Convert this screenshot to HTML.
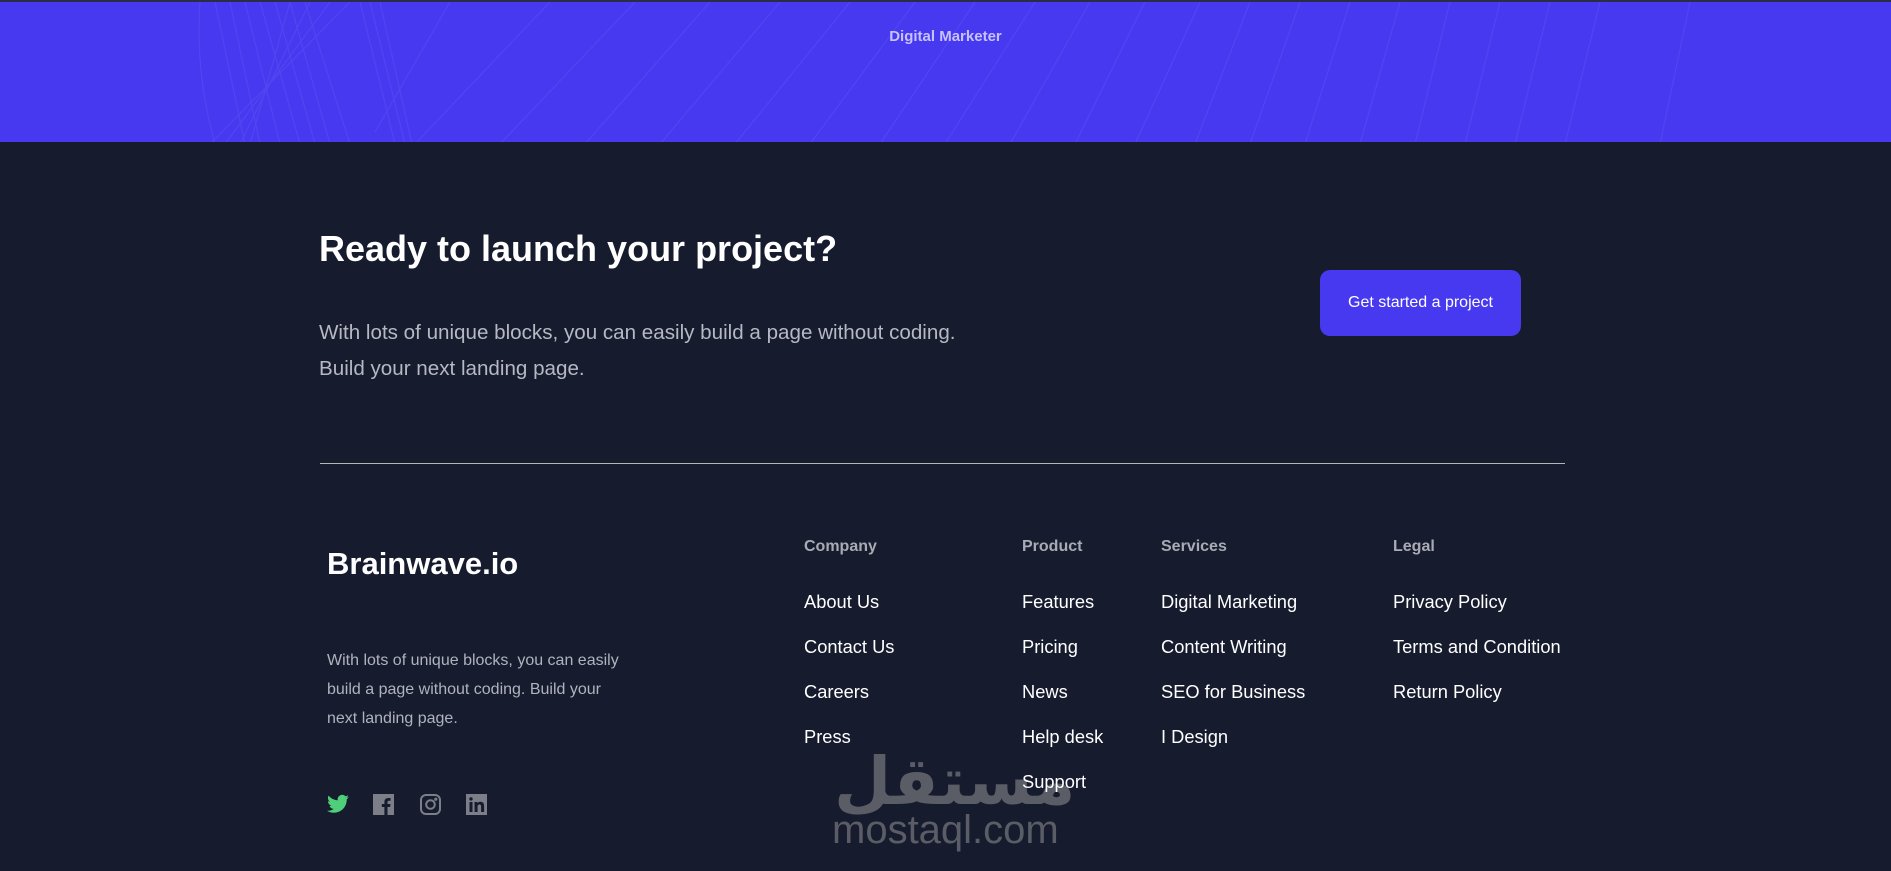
<!DOCTYPE html>
<html><head><meta charset="utf-8"><style>
*{margin:0;padding:0;box-sizing:border-box}
body{width:1891px;height:871px;overflow:hidden;background:#161b2e;font-family:"Liberation Sans",Arial,sans-serif;position:relative}
.band{position:absolute;left:0;top:0;width:1891px;height:142px;background:#4639ef;border-top:2px solid #2a2d45;overflow:hidden}
.a{position:absolute;white-space:nowrap}
.h{color:#a9abb4;font-size:16px;font-weight:bold}
.l{color:#fff;font-size:18.3px}
</style></head><body>
<div class="band">
<svg width="1891" height="142" style="position:absolute;left:0;top:0">
<g stroke="#5a50f5" stroke-width="1.2" fill="none" opacity="0.55">
<path d="M200 0 Q195 70 215 142"/><path d="M215 0 L245 142"/><path d="M230 0 L260 142"/><path d="M245 0 L280 142"/>
<path d="M260 0 L300 142"/><path d="M275 0 L315 142"/><path d="M290 0 L330 142"/><path d="M305 0 L350 142"/>
<path d="M350 0 L210 142"/><path d="M330 0 L225 142"/><path d="M310 0 L240 142"/><path d="M290 0 L250 142"/>
<path d="M360 0 L395 142"/><path d="M370 0 L405 142"/><path d="M380 0 L412 142"/>
<path d="M450 0 L375 130"/><path d="M550 0 L415 142"/><path d="M635 0 L500 142"/><path d="M710 0 L585 142"/>
<path d="M780 0 L660 142"/><path d="M850 0 L735 142"/><path d="M915 0 L810 142"/><path d="M975 0 L880 142"/>
<path d="M1035 0 L945 142"/><path d="M1090 0 L1010 142"/><path d="M1145 0 L1075 142"/><path d="M1200 0 L1135 142"/>
<path d="M1250 0 L1195 142"/><path d="M1300 0 L1250 142"/><path d="M1350 0 L1305 142"/><path d="M1400 0 L1360 142"/>
<path d="M1450 0 L1415 142"/><path d="M1500 0 L1465 142"/><path d="M1550 0 L1515 142"/><path d="M1600 0 L1565 142"/>
<path d="M1690 0 L1660 142"/>
</g></svg>
<div class="a" style="left:0;width:1891px;text-align:center;top:26px;color:#c6c2ff;font-size:15px;font-weight:bold">Digital Marketer</div>
</div>

<div class="a" style="left:319px;top:228px;color:#fff;font-size:36px;font-weight:bold">Ready to launch your project?</div>
<div class="a" style="left:319px;top:315px;color:#b6b8c2;font-size:20.6px;line-height:36px">With lots of unique blocks, you can easily build a page without coding.<br>Build your next landing page.</div>
<div class="a" style="left:1320px;top:270px;width:201px;height:66px;background:#4639ef;border-radius:10px;color:#fff;font-size:16px;line-height:66px;text-align:center">Get started a project</div>
<div class="a" style="left:320px;top:463px;width:1245px;height:1px;background:#b3b5bd"></div>

<div class="a" style="left:327px;top:546px;color:#fff;font-size:31px;font-weight:bold">Brainwave.io</div>
<div class="a" style="left:327px;top:646px;color:#b0b3bd;font-size:16px;line-height:29px">With lots of unique blocks, you can easily<br>build a page without coding. Build your<br>next landing page.</div>

<svg class="a" style="left:327px;top:794px" width="22" height="20" viewBox="0 0 24 20"><path fill="#4fcf7a" d="M24 2.4a10 10 0 0 1-2.8.8A5 5 0 0 0 23.3.4a10 10 0 0 1-3.1 1.2A4.9 4.9 0 0 0 11.8 6 14 14 0 0 1 1.7.9a4.9 4.9 0 0 0 1.5 6.6A4.9 4.9 0 0 1 1 6.9a4.9 4.9 0 0 0 3.9 4.9 5 5 0 0 1-2.2.1 4.9 4.9 0 0 0 4.6 3.4A9.9 9.9 0 0 1 0 17.3 14 14 0 0 0 7.5 19.5c9.1 0 14-7.5 14-14v-.6A10 10 0 0 0 24 2.4z"/></svg>
<svg class="a" style="left:373px;top:794px" width="21" height="21" viewBox="0 0 21 21"><rect width="21" height="21" fill="#7c7f88"/><path fill="#161b2e" d="M14.5 21v-8h2.6l.4-3h-3V8.2c0-.9.3-1.5 1.5-1.5h1.6V4.1a21 21 0 0 0-2.3-.1c-2.3 0-3.900 1.4-3.900 4V10H8.8v3h2.6v8z"/></svg>
<svg class="a" style="left:420px;top:794px" width="21" height="21" viewBox="0 0 21 21" fill="none" stroke="#7c7f88" stroke-width="2"><rect x="1" y="1" width="19" height="19" rx="5"/><circle cx="10.5" cy="10.5" r="4.3"/><circle cx="15.8" cy="5.2" r=".6" fill="#7c7f88"/></svg>
<svg class="a" style="left:466px;top:794px" width="21" height="21" viewBox="0 0 21 21"><rect width="21" height="21" fill="#7c7f88"/><path fill="#161b2e" d="M3.5 8h3v10h-3zM5 3.2a1.7 1.7 0 1 1 0 3.4 1.7 1.7 0 0 1 0-3.4zM8.5 8h2.9v1.4c.4-.8 1.4-1.600 3-1.600 3.1 0 3.7 2 3.7 4.7V18h-3v-4.9c0-1.2 0-2.6-1.6-2.6s-1.9 1.2-1.9 2.5v5h-3z"/></svg>

<div class="a" style="left:834px;top:738px;color:#5a5c66;font-size:66px;font-weight:bold;font-family:'Noto Sans CJK SC','DejaVu Sans',sans-serif;line-height:76px">مستقل</div>
<div class="a" style="left:832px;top:808px;color:#5a5c66;font-size:40px;line-height:44px">mostaql.com</div>

<div class="a h" style="left:804px;top:538px">Company</div>
<div class="a l" style="left:804px;top:591px">About Us</div>
<div class="a l" style="left:804px;top:636px">Contact Us</div>
<div class="a l" style="left:804px;top:681px">Careers</div>
<div class="a l" style="left:804px;top:726px">Press</div>

<div class="a h" style="left:1022px;top:538px">Product</div>
<div class="a l" style="left:1022px;top:591px">Features</div>
<div class="a l" style="left:1022px;top:636px">Pricing</div>
<div class="a l" style="left:1022px;top:681px">News</div>
<div class="a l" style="left:1022px;top:726px">Help desk</div>
<div class="a l" style="left:1022px;top:771px">Support</div>

<div class="a h" style="left:1161px;top:538px">Services</div>
<div class="a l" style="left:1161px;top:591px">Digital Marketing</div>
<div class="a l" style="left:1161px;top:636px">Content Writing</div>
<div class="a l" style="left:1161px;top:681px">SEO for Business</div>
<div class="a l" style="left:1161px;top:726px">I Design</div>

<div class="a h" style="left:1393px;top:538px">Legal</div>
<div class="a l" style="left:1393px;top:591px">Privacy Policy</div>
<div class="a l" style="left:1393px;top:636px">Terms and Condition</div>
<div class="a l" style="left:1393px;top:681px">Return Policy</div>
</body></html>
